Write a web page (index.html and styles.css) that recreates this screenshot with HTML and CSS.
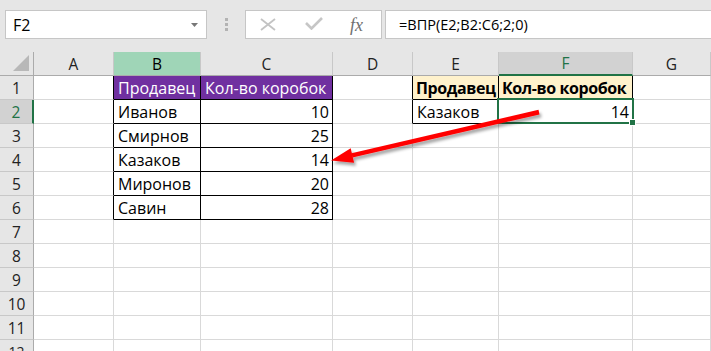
FILE: index.html
```html
<!DOCTYPE html>
<html lang="ru">
<head>
<meta charset="utf-8">
<link rel="stylesheet" href="styles.css">
</head>
<body>
<div class="app">
  <div class="toolbar">
    <div class="namebox"><span class="nb-text">F2</span><svg class="caret" width="7" height="4" viewBox="0 0 7 4"><polygon points="0,0 7,0 3.5,4" fill="#777"/></svg></div>
    <div class="sep"><i></i><i></i><i></i></div>
    <div class="fxbox">
      <svg class="ic-x" width="16" height="13" viewBox="0 0 16 13"><path d="M1 1 L15 12 M15 1 L1 12" stroke="#c3c3c3" stroke-width="1.8" fill="none"/></svg>
      <svg class="ic-ok" width="18" height="13" viewBox="0 0 18 13"><polyline points="1,6 6.5,11.5 17,1" stroke="#c6c6c6" stroke-width="2.6" fill="none"/></svg>
      <span class="fx">fx</span>
    </div>
    <div class="formula">=ВПР(E2;B2:C6;2;0)</div>
  </div>
  <div class="sheet">
    <div class="c corner"><svg width="17" height="17" viewBox="0 0 17 17"><polygon points="16,0 16,16 0,16" fill="#b8b8b8"/></svg></div>
    <div class="c ch">A</div>
    <div class="c ch chsel-b">B</div>
    <div class="c ch">C</div>
    <div class="c ch">D</div>
    <div class="c ch">E</div>
    <div class="c ch chsel">F</div>
    <div class="c ch">G</div>

    <div class="c rh">1</div>
    <div class="c bk-r"></div>
    <div class="c pur bk-r bk-b">Продавец</div>
    <div class="c pur bk-r bk-b">Кол-во коробок</div>
    <div class="c bk-r"></div>
    <div class="c yel bk-r bk-b">Продавец</div>
    <div class="c yel bk-r bk-b">Кол-во коробок</div>
    <div class="c"></div>

    <div class="c rh rhsel">2</div>
    <div class="c bk-r"></div>
    <div class="c bk-r bk-b">Иванов</div>
    <div class="c num bk-r bk-b">10</div>
    <div class="c bk-r"></div>
    <div class="c bk-r bk-b">Казаков</div>
    <div class="c num bk-r bk-b sel">14</div>
    <div class="c"></div>

    <div class="c rh">3</div>
    <div class="c bk-r"></div>
    <div class="c bk-r bk-b">Смирнов</div>
    <div class="c num bk-r bk-b">25</div>
    <div class="c"></div>
    <div class="c"></div>
    <div class="c"></div>
    <div class="c"></div>

    <div class="c rh">4</div>
    <div class="c bk-r"></div>
    <div class="c bk-r bk-b">Казаков</div>
    <div class="c num bk-r bk-b">14</div>
    <div class="c"></div>
    <div class="c"></div>
    <div class="c"></div>
    <div class="c"></div>

    <div class="c rh">5</div>
    <div class="c bk-r"></div>
    <div class="c bk-r bk-b">Миронов</div>
    <div class="c num bk-r bk-b">20</div>
    <div class="c"></div>
    <div class="c"></div>
    <div class="c"></div>
    <div class="c"></div>

    <div class="c rh">6</div>
    <div class="c bk-r"></div>
    <div class="c bk-r bk-b">Савин</div>
    <div class="c num bk-r bk-b">28</div>
    <div class="c"></div>
    <div class="c"></div>
    <div class="c"></div>
    <div class="c"></div>

    <div class="c rh">7</div>
    <div class="c"></div><div class="c"></div><div class="c"></div><div class="c"></div><div class="c"></div><div class="c"></div><div class="c"></div>
    <div class="c rh">8</div>
    <div class="c"></div><div class="c"></div><div class="c"></div><div class="c"></div><div class="c"></div><div class="c"></div><div class="c"></div>
    <div class="c rh">9</div>
    <div class="c"></div><div class="c"></div><div class="c"></div><div class="c"></div><div class="c"></div><div class="c"></div><div class="c"></div>
    <div class="c rh">10</div>
    <div class="c"></div><div class="c"></div><div class="c"></div><div class="c"></div><div class="c"></div><div class="c"></div><div class="c"></div>
    <div class="c rh">11</div>
    <div class="c"></div><div class="c"></div><div class="c"></div><div class="c"></div><div class="c"></div><div class="c"></div><div class="c"></div>
    <div class="c rh rh-last">12</div>
    <div class="c"></div><div class="c"></div><div class="c"></div><div class="c"></div><div class="c"></div><div class="c"></div><div class="c"></div>
  </div>
  <svg class="arrow" width="711" height="351" viewBox="0 0 711 351">
    <defs>
      <filter id="sh" x="-10%" y="-50%" width="130%" height="250%">
        <feDropShadow dx="2" dy="3" stdDeviation="1.8" flood-color="#000" flood-opacity="0.35"/>
      </filter>
    </defs>
    <g filter="url(#sh)">
      <polygon points="538.5,109.8 539.5,114.4 352.5,157.6 351.5,153.2" fill="#ff0000"/>
      <polygon points="331,160.5 350.7,148.2 354.1,162.8" fill="#ff0000"/>
    </g>
  </svg>
</div>
</body>
</html>
```
FILE: styles.css
```css
html, body {
  margin: 0;
  padding: 0;
}
body {
  width: 711px;
  height: 351px;
  overflow: hidden;
  background: #e6e6e6;
}
.app {
  position: relative;
  width: 711px;
  height: 351px;
  overflow: hidden;
}
.toolbar {
  height: 52px;
  box-sizing: border-box;
  padding-top: 10px;
  display: flex;
  align-items: flex-start;
  background: #e6e6e6;
}
.namebox {
  margin-left: 5px;
  width: 202px;
  height: 29px;
  box-sizing: border-box;
  border: 1px solid #c6c6c6;
  background: #fff;
  display: flex;
  align-items: center;
  justify-content: space-between;
  padding: 0 8px 0 7px;
  font-family: "Open Sans", "Noto Sans", sans-serif;
  font-size: 16px;
  color: #000;
}
.nb-text {
  line-height: 20px;
}
.caret {
  display: block;
  margin-top: 1px;
}
.sep {
  width: 38px;
  height: 29px;
  display: flex;
  flex-direction: column;
  align-items: center;
  justify-content: center;
  gap: 2px;
}
.sep i {
  display: block;
  width: 3px;
  height: 3px;
  background: #b3b3b3;
}
.fxbox {
  width: 137px;
  height: 29px;
  box-sizing: border-box;
  border: 1px solid #c6c6c6;
  background: #fff;
  display: flex;
  align-items: center;
}
.ic-x {
  display: block;
  margin-left: 14px;
}
.ic-ok {
  display: block;
  margin-left: 29px;
  margin-top: -2px;
}
.fx {
  margin-left: 27px;
  font-family: "Liberation Serif", "DejaVu Serif", serif;
  font-style: italic;
  font-size: 18px;
  color: #707070;
  line-height: 20px;
}
.formula {
  margin-left: 3px;
  flex: 1;
  height: 29px;
  box-sizing: border-box;
  border: 1px solid #c6c6c6;
  border-right: none;
  background: #fff;
  padding-left: 13px;
  display: flex;
  align-items: center;
  font-family: "Open Sans", "Noto Sans", sans-serif;
  font-size: 14.5px;
  color: #000;
}
.sheet {
  display: grid;
  grid-template-columns: 34px 80px 87px 132px 80px 86px 134px 78px;
  grid-auto-rows: 24px;
  background: #fff;
}
.c {
  box-sizing: border-box;
  border-right: 1px solid #d9d9d9;
  border-bottom: 1px solid #d9d9d9;
  padding: 0 3px 1px 4px;
  display: flex;
  align-items: flex-end;
  font-family: "Open Sans", "Noto Sans", sans-serif;
  font-size: 16px;
  line-height: 20px;
  color: #000;
  white-space: nowrap;
  overflow: visible;
  min-width: 0;
}
.corner {
  background: #e6e6e6;
  border-right: 1px solid #ababab;
  border-bottom: 1px solid #ababab;
  align-items: flex-end;
  justify-content: flex-end;
  padding: 0 3px 3px 0;
}
.corner svg {
  display: block;
}
.ch {
  background: #e6e6e6;
  border-right: 1px solid #c8c8c8;
  border-bottom: 1px solid #ababab;
  justify-content: center;
  align-items: center;
  padding: 0;
  font-size: 15.5px;
  line-height: 20px;
  color: #222;
}
.chsel-b {
  background: #9fd5b7;
  color: #000;
}
.chsel {
  background: #d2d2d2;
  color: #217346;
  border-bottom: 2px solid #217346;
}
.rh {
  background: #e6e6e6;
  border-right: 1px solid #ababab;
  border-bottom: 1px solid #c8c8c8;
  justify-content: center;
  padding: 0 0 1px 0;
  font-size: 15.5px;
  color: #222;
}
.rh-last {
  font-size: 14px;
}
.rhsel {
  background: #d2d2d2;
  color: #217346;
  border-right: 2px solid #217346;
}
.bk-r {
  border-right-color: #000;
}
.bk-b {
  border-bottom-color: #000;
}
.pur {
  background: #7030a0;
  color: #fff;
}
.yel {
  background: #fff2cc;
  font-weight: bold;
  letter-spacing: -0.4px;
  padding-left: 3px;
}
.num {
  justify-content: flex-end;
}
.sel {
  position: relative;
}
.sel::after {
  content: "";
  position: absolute;
  left: -2px;
  top: -2px;
  right: -2px;
  bottom: -1px;
  border: 2px solid #217346;
}
.sel::before {
  content: "";
  position: absolute;
  right: -4px;
  bottom: -3px;
  width: 5px;
  height: 5px;
  background: #217346;
  border: 1px solid #fff;
  z-index: 2;
}
.arrow {
  position: absolute;
  left: 0;
  top: 0;
  pointer-events: none;
}
```
